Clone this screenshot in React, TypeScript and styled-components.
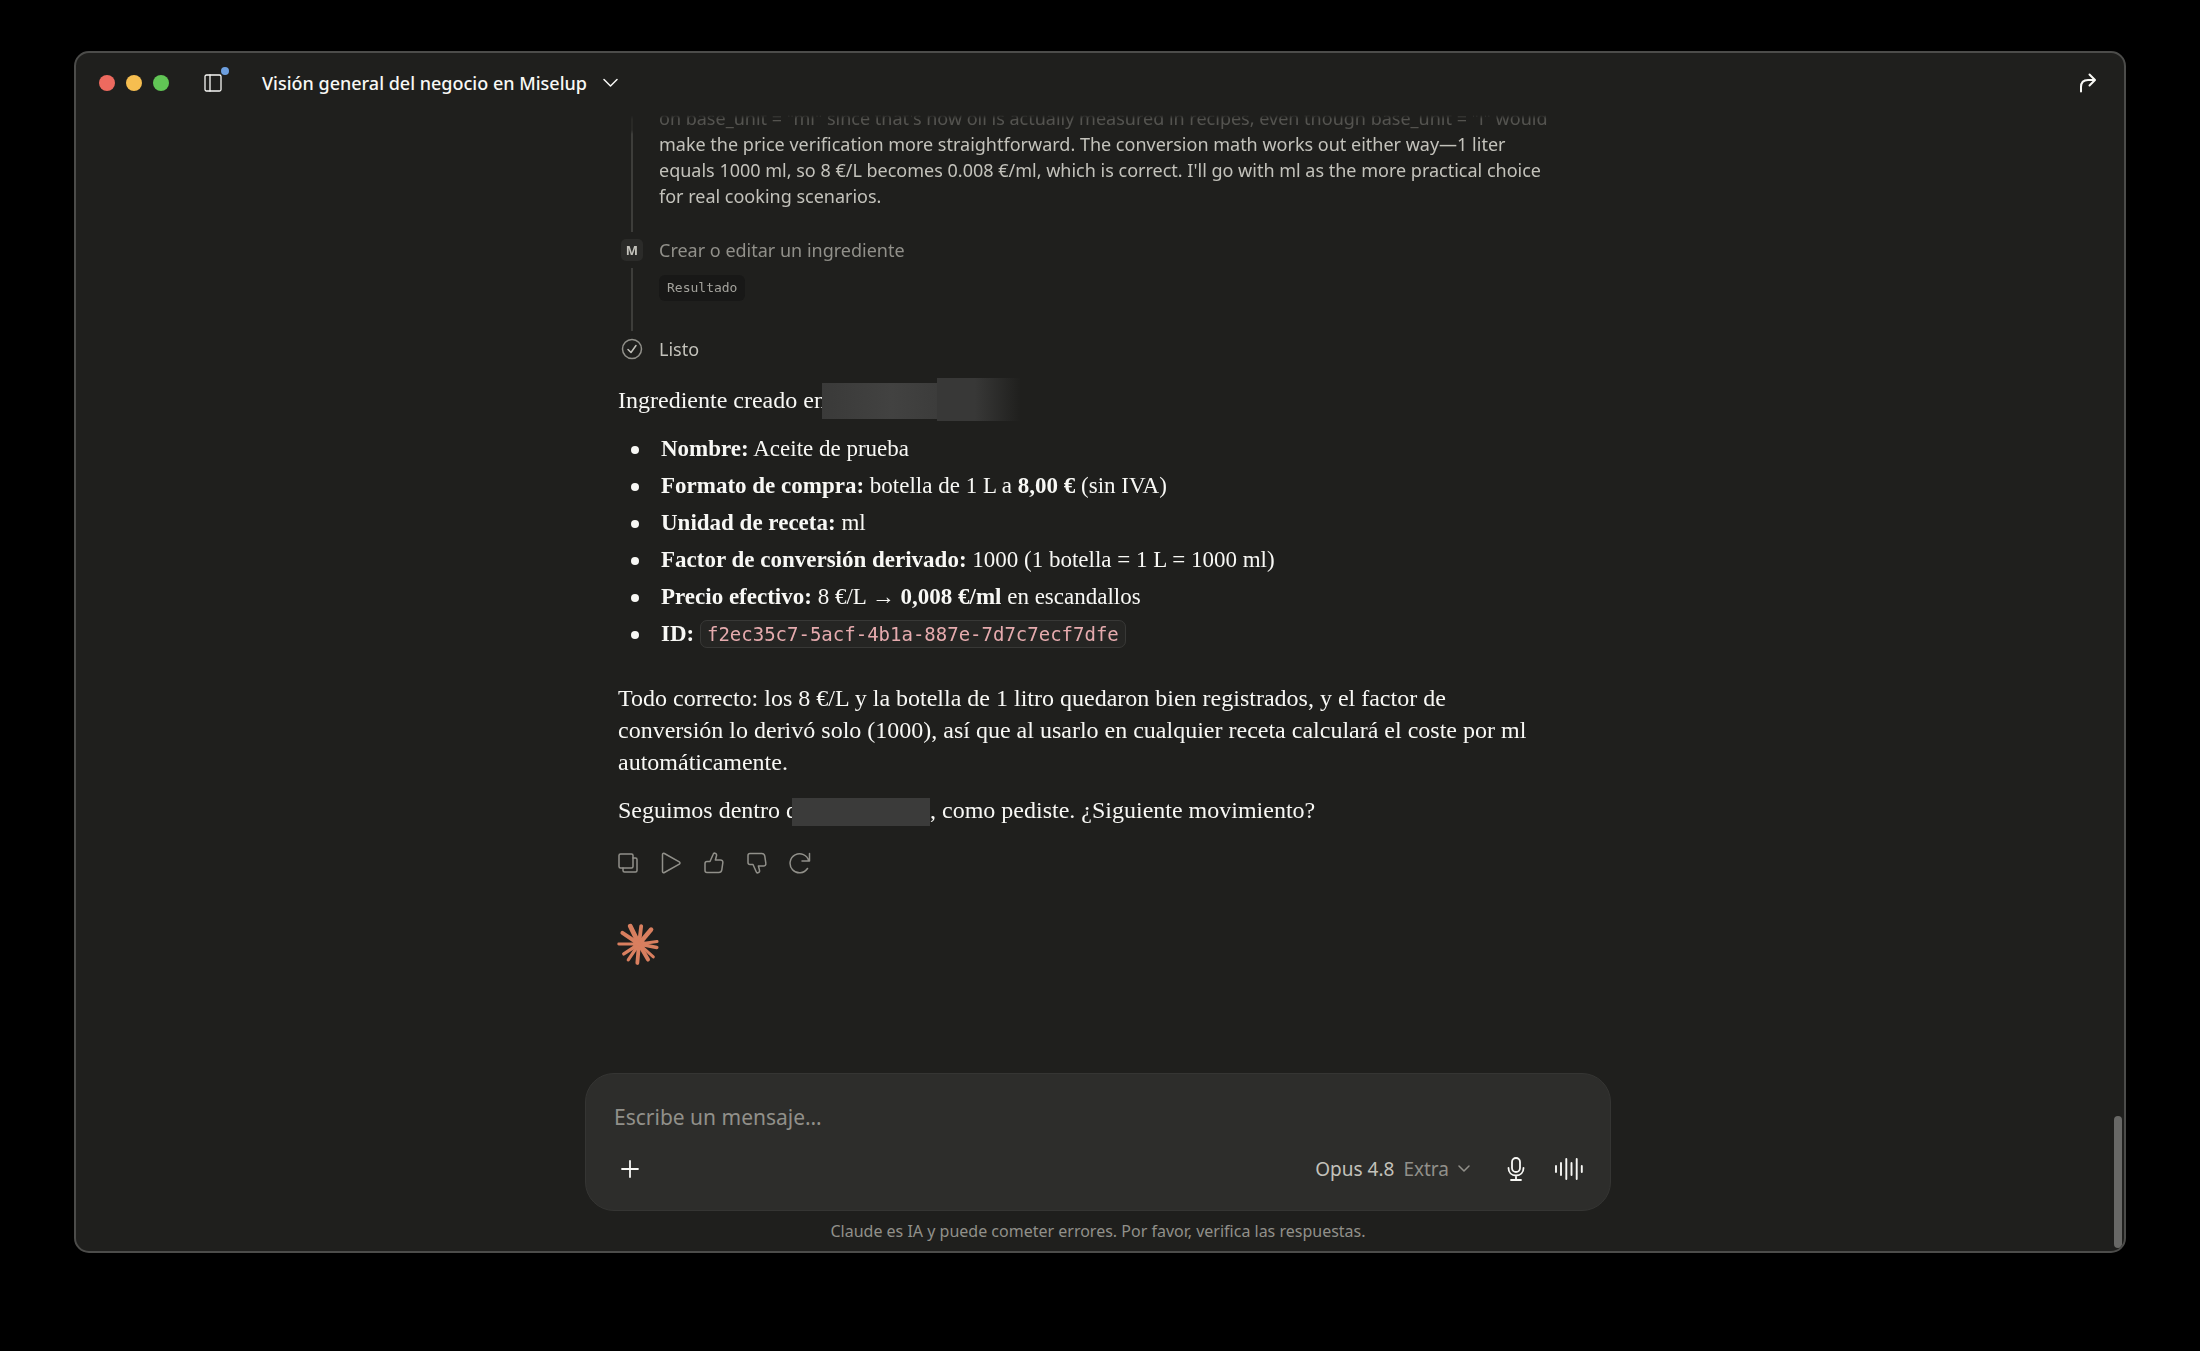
import React, { useState } from "react";
import styled, { createGlobalStyle } from "styled-components";

const sans = `"Noto Sans", "Open Sans", sans-serif`;
const serif = `"Liberation Serif", serif`;
const mono = `"DejaVu Sans Mono", monospace`;

const color = {
  window: "#1f1f1d",
  panel: "#2d2d2b",
  text: "#f8f8f5",
  soft: "#c3c2bb",
  muted: "#91908a",
  rule: "#3d3d3a",
};

const GlobalStyle = createGlobalStyle`
  *, *::before, *::after { box-sizing: border-box; }
  body { margin: 0; background: #000; }
  button, textarea { font: inherit; color: inherit; }
  p, ul, h1 { margin: 0; padding: 0; }
`;

const Desktop = styled.div`
  display: flex;
  min-height: 100vh;
  padding: 51px 74px 98px;
  background: #000;
  font-family: ${sans};
  color: ${color.text};
`;

const Window = styled.div`
  position: relative;
  display: flex;
  flex-direction: column;
  flex: 1;
  min-width: 0;
  padding-right: 4px;
  overflow: hidden;
  background: ${color.window};
  border: 2px solid #4c4c4a;
  border-radius: 15px;
`;

const TitleBar = styled.header`
  display: flex;
  align-items: center;
  height: 60px;
  padding: 0 16px 0 23px;
`;

const Lights = styled.div`
  display: flex;
  gap: 11px;
`;

const Light = styled.button<{ $tone: string }>`
  width: 16px;
  height: 16px;
  padding: 0;
  border: 0;
  border-radius: 50%;
  background: ${(p) => p.$tone};
`;

const IconButton = styled.button`
  position: relative;
  display: inline-flex;
  align-items: center;
  justify-content: center;
  flex: none;
  width: 32px;
  height: 32px;
  padding: 0;
  border: 0;
  background: none;
  cursor: pointer;

  svg { display: block; }
`;

const SidebarButton = styled(IconButton)`
  margin-left: 28px;
`;

const UnreadDot = styled.span`
  position: absolute;
  top: 0;
  right: 0;
  width: 8px;
  height: 8px;
  border-radius: 50%;
  background: #6d9fdf;
`;

const TitleButton = styled.button`
  display: flex;
  align-items: center;
  gap: 16px;
  margin-left: 33px;
  margin-right: auto;
  padding: 0;
  border: 0;
  background: none;
  font-size: 18px;
  line-height: 26px;
  font-weight: 500;
  cursor: pointer;
`;

const Scroll = styled.main`
  flex: 1;
  min-height: 0;
  overflow: hidden;
  mask-image: linear-gradient(to bottom, transparent 2px, rgba(0, 0, 0, 0.32) 6px, rgba(0, 0, 0, 0.32) 17px, #000 21px);
`;

const Column = styled.div`
  display: flex;
  flex-direction: column;
  width: 100%;
  max-width: 960px;
  margin: 0 auto;
`;

const Steps = styled.div`
  display: grid;
  grid-template-columns: 28px 1fr;
  column-gap: 13px;
  margin-top: -8px;
  font-size: 18px;
  line-height: 26px;
`;

const Rail = styled.div`
  justify-self: center;
  width: 2px;
  background: ${color.rule};
`;

const Thought = styled.p`
  padding: 0 20px 23px 0;
  color: ${color.soft};
`;

const Marker = styled.div`
  display: flex;
  align-items: center;
  justify-content: center;
  height: 36px;
`;

const Avatar = styled.span`
  width: 22px;
  height: 22px;
  border-radius: 5px;
  background: #2b2b29;
  color: ${color.soft};
  font-size: 13px;
  line-height: 22px;
  font-weight: 700;
  text-align: center;
`;

const StepLabel = styled.div<{ $done?: boolean }>`
  display: flex;
  align-items: center;
  height: 36px;
  color: ${(p) => (p.$done ? color.soft : color.muted)};
`;

const StepBody = styled.div`
  display: flex;
  align-items: flex-start;
  padding: 7px 0 30px;
`;

const ResultButton = styled.button`
  height: 26px;
  padding: 0 8px;
  border: 0;
  border-radius: 6px;
  background: #181817;
  color: #a3a29c;
  font-family: ${mono};
  font-size: 13px;
  line-height: 26px;
  cursor: pointer;
`;

const Answer = styled.article`
  display: flex;
  flex-direction: column;
  margin-top: 17px;
  font-family: ${serif};
  font-size: 24px;
  line-height: 32px;
`;

const Paragraph = styled.p<{ $gap?: number }>`
  margin-top: ${(p) => p.$gap ?? 0}px;
  padding-right: 40px;
`;

const FactList = styled.ul`
  display: grid;
  row-gap: 5px;
  margin-top: 17px;
  padding-left: 43px;
  font-size: 23px;
  list-style: none;
`;

const Fact = styled.li`
  display: block;

  &::before {
    content: "";
    float: left;
    width: 8px;
    height: 8px;
    margin: 13px 0 0 -30px;
    border-radius: 50%;
    background: ${color.text};
  }
`;

const Code = styled.code`
  padding: 2px 6px;
  border: 1px solid #383836;
  border-radius: 7px;
  background: #252523;
  color: #e6abae;
  font-family: ${mono};
  font-size: 19px;
  line-height: 22px;
`;

const Redacted = styled.span`
  display: inline-block;
  width: 138px;
  height: 28px;
  margin-left: -6px;
  background: #3b3b3a;
  vertical-align: -8px;
`;

const NameMask = styled.span`
  position: relative;
  display: inline-flex;
  width: 200px;
  height: 32px;
  margin-left: -4px;
  vertical-align: top;
`;

const MaskBlock = styled.span`
  position: absolute;
  inset: -1px auto auto 0;
  width: 116px;
  height: 36px;
  background: linear-gradient(to right, #3a3a39, #424241 60%, #3c3c3b);
`;

const MaskFade = styled.span`
  position: absolute;
  inset: -6px auto auto 115px;
  width: 84px;
  height: 43px;
  background: linear-gradient(to right, #383837 45%, ${color.window});
`;

const Actions = styled.div`
  display: flex;
  gap: 11px;
  margin: 21px 0 0 -6px;
  color: ${color.muted};
`;

const Logo = styled.svg`
  display: block;
  width: 44px;
  height: 44px;
  margin: 43px 0 0 -1px;
`;

const Dock = styled.footer`
  display: flex;
  flex-direction: column;
  align-items: center;
  padding: 0 20px;
`;

const Composer = styled.form`
  display: flex;
  flex-direction: column;
  width: 100%;
  max-width: 1026px;
  padding: 27px 25px 25px 28px;
  border: 1px solid #353533;
  border-radius: 29px;
  background: ${color.panel};
`;

const Message = styled.textarea`
  display: block;
  width: 100%;
  height: 32px;
  padding: 0;
  border: 0;
  outline: 0;
  resize: none;
  overflow: hidden;
  background: none;
  font-size: 21px;
  line-height: 32px;

  &::placeholder {
    color: ${color.muted};
    opacity: 1;
  }
`;

const Tools = styled.div`
  display: flex;
  align-items: center;
  gap: 21px;
  margin-top: 20px;
`;

const ModelButton = styled.button`
  display: flex;
  align-items: center;
  gap: 9px;
  margin-left: auto;
  margin-right: 9px;
  padding: 0;
  border: 0;
  background: none;
  color: ${color.soft};
  font-size: 19px;
  line-height: 26px;
  cursor: pointer;
`;

const Effort = styled.span`
  color: ${color.muted};
`;

const Notice = styled.p`
  padding: 8px 0;
  color: ${color.muted};
  font-size: 16px;
  line-height: 24px;
`;

const ScrollThumb = styled.div`
  position: absolute;
  right: 2px;
  bottom: 3px;
  width: 8px;
  height: 132px;
  border-radius: 4px;
  background: #686866;
`;

type IconProps = {
  w?: number;
  h?: number;
  box?: string;
  stroke?: number;
  children: React.ReactNode;
};

const Icon = ({ w = 22, h = 22, box, stroke = 1.5, children }: IconProps) => (
  <svg
    width={w}
    height={h}
    viewBox={box ?? `0 0 ${w} ${h}`}
    fill="none"
    stroke="currentColor"
    strokeWidth={stroke}
    strokeLinecap="round"
    strokeLinejoin="round"
    aria-hidden="true"
  >
    {children}
  </svg>
);

const facts: { label: string; value: React.ReactNode }[] = [
  { label: "Nombre:", value: "Aceite de prueba" },
  {
    label: "Formato de compra:",
    value: (
      <>
        botella de 1 L a <strong>8,00 €</strong> (sin IVA)
      </>
    ),
  },
  { label: "Unidad de receta:", value: "ml" },
  { label: "Factor de conversión derivado:", value: "1000 (1 botella = 1 L = 1000 ml)" },
  {
    label: "Precio efectivo:",
    value: (
      <>
        8 €/L → <strong>0,008 €/ml</strong> en escandallos
      </>
    ),
  },
  { label: "ID:", value: <Code>f2ec35c7-5acf-4b1a-887e-7d7c7ecf7dfe</Code> },
];

/* Rays of the logo: angle in degrees, outer radius and thickness. */
const rays: [number, number, number][] = [
  [-116, 21, 4.8],
  [-83, 19, 3.8],
  [-50, 20, 4.4],
  [-8, 19, 3],
  [11, 19, 3.6],
  [42, 20, 3],
  [60, 19, 4],
  [95, 20, 3.8],
  [124, 20, 3.2],
  [147, 19, 3.4],
  [180, 21, 2.8],
  [214, 21, 4],
];

export default function App() {
  const [message, setMessage] = useState("");

  return (
    <>
      <GlobalStyle />
      <Desktop>
        <Window>
          <TitleBar>
            <Lights>
              <Light $tone="#ed6a5f" aria-label="Cerrar" />
              <Light $tone="#f6be50" aria-label="Minimizar" />
              <Light $tone="#61c555" aria-label="Ampliar" />
            </Lights>
            <SidebarButton aria-label="Barra lateral">
              <Icon w={18} h={18} stroke={1.3}>
                <rect x="1" y="1" width="16" height="16" rx="1.5" />
                <path d="M6 1v16" />
              </Icon>
              <UnreadDot />
            </SidebarButton>
            <TitleButton>
              Visión general del negocio en Miselup
              <Icon w={15} h={10}>
                <path d="M1 1.5l6.5 6.5L14 1.5" />
              </Icon>
            </TitleButton>
            <IconButton aria-label="Compartir">
              <Icon w={18} h={20} stroke={2}>
                <path d="M2 18.500v-4.500c0-4.500 2.500-7 7-7h6.500M10.500 1.500l5.500 5.500-5.500 5.500" />
              </Icon>
            </IconButton>
          </TitleBar>

          <Scroll>
            <Column>
              <Steps>
                <Rail />
                <Thought>
                  on base_unit = "ml" since that's how oil is actually measured in recipes, even though base_unit = "l"
                  would make the price verification more straightforward. The conversion math works out either way—1
                  liter equals 1000 ml, so 8 €/L becomes 0.008 €/ml, which is correct. I'll go with ml as the more
                  practical choice for real cooking scenarios.
                </Thought>

                <Marker>
                  <Avatar>M</Avatar>
                </Marker>
                <StepLabel>Crear o editar un ingrediente</StepLabel>

                <Rail />
                <StepBody>
                  <ResultButton>Resultado</ResultButton>
                </StepBody>

                <Marker>
                  <Icon>
                    <circle cx="11" cy="11" r="9.500" stroke={color.muted} />
                    <path d="M7 11.500l3 3 5-7" stroke={color.soft} />
                  </Icon>
                </Marker>
                <StepLabel $done>Listo</StepLabel>
              </Steps>

              <Answer>
                <Paragraph>
                  Ingrediente creado en
                  <NameMask>
                    <MaskBlock />
                    <MaskFade />
                  </NameMask>
                </Paragraph>
                <FactList>
                  {facts.map((fact) => (
                    <Fact key={fact.label}>
                      <strong>{fact.label}</strong> {fact.value}
                    </Fact>
                  ))}
                </FactList>
                <Paragraph $gap={32}>
                  Todo correcto: los 8 €/L y la botella de 1 litro quedaron bien registrados, y el factor de conversión
                  lo derivó solo (1000), así que al usarlo en cualquier receta calculará el coste por ml
                  automáticamente.
                </Paragraph>
                <Paragraph $gap={16}>
                  Seguimos dentro d
                  <Redacted />, como pediste. ¿Siguiente movimiento?
                </Paragraph>
              </Answer>

              <Actions>
                <IconButton aria-label="Copiar">
                  <Icon w={20} h={20}>
                    <rect x="1" y="1" width="14" height="14" rx="1.500" />
                    <path d="M15 5h2.500a1.500 1.500 0 0 1 1.500 1.500V17.500a1.500 1.500 0 0 1-1.500 1.500H6.500A1.500 1.500 0 0 1 5 17.500V15" />
                  </Icon>
                </IconButton>
                <IconButton aria-label="Reproducir">
                  <Icon w={20} h={22}>
                    <path d="M1.500 2.600v16.800c0 1 1 1.600 1.900 1.100l14.900-8.400c.9-.5.9-1.700 0-2.200L3.400 1.500C2.500 1 1.500 1.600 1.500 2.600z" />
                  </Icon>
                </IconButton>
                <IconButton aria-label="Buena respuesta">
                  <Icon w={20} h={22}>
                    <path d="M3 9.500h3L9.200 2.200C9.500 1.300 10.200 1 11 1.200c1.300.3 1.800 1.400 1.500 2.600L11.400 8H16.500c1.600 0 2.600 1.200 2.300 2.800l-1 7c-.3 1.700-1.300 2.700-3 2.700H3c-1.200 0-2-.8-2-2v-7c0-1.200.8-2 2-2z" />
                  </Icon>
                </IconButton>
                <IconButton aria-label="Mala respuesta">
                  <Icon w={20} h={22}>
                    <path d="M3 12.500h3l3.200 7.300c.3.900 1 1.200 1.800 1 1.300-.3 1.800-1.400 1.500-2.600L11.400 14H16.500c1.600 0 2.600-1.200 2.300-2.800l-1-7c-.3-1.700-1.300-2.700-3-2.700H3c-1.200 0-2 .8-2 2v7c0 1.200.8 2 2 2z" />
                  </Icon>
                </IconButton>
                <IconButton aria-label="Reintentar">
                  <Icon w={22} h={22}>
                    <path d="M20.500 1.500v7.500h-7.500M19.800 9A9.500 9.500 0 1 0 18.500 16.500" />
                  </Icon>
                </IconButton>
              </Actions>

              <Logo viewBox="0 0 44 44" aria-hidden="true">
                <circle cx="22" cy="22" r="6" fill="#d97f5f" />
                {rays.map(([angle, length, thickness]) => (
                  <line
                    key={angle}
                    x1="22"
                    y1="22"
                    x2={22 + Math.cos((angle * Math.PI) / 180) * (length - thickness / 4)}
                    y2={22 + Math.sin((angle * Math.PI) / 180) * (length - thickness / 4)}
                    stroke="#d97f5f"
                    strokeWidth={thickness}
                    strokeLinecap="round"
                  />
                ))}
              </Logo>
            </Column>
          </Scroll>

          <Dock>
            <Composer onSubmit={(event) => event.preventDefault()}>
              <Message
                aria-label="Mensaje"
                placeholder="Escribe un mensaje…"
                rows={1}
                value={message}
                onChange={(event) => setMessage(event.target.value)}
              />
              <Tools>
                <IconButton type="button" aria-label="Añadir">
                  <Icon w={18} h={18} stroke={1.8}>
                    <path d="M9 1v16M1 9h16" />
                  </Icon>
                </IconButton>
                <ModelButton type="button">
                  Opus 4.8 <Effort>Extra</Effort>
                  <Icon w={12} h={8}>
                    <path d="M1 1l5 5 5-5" stroke={color.muted} />
                  </Icon>
                </ModelButton>
                <IconButton type="button" aria-label="Dictar">
                  <Icon w={18} h={24} stroke={1.8}>
                    <rect x="5" y="1" width="8" height="14" rx="4" />
                    <path d="M1.500 11c0 4.500 3 7.500 7.500 7.500s7.500-3 7.500-7.500M9 18.500V23M4 23h10" />
                  </Icon>
                </IconButton>
                <IconButton type="button" aria-label="Modo de voz">
                  <Icon w={28} h={22} stroke={1.9}>
                    <path d="M1 8v6M6 5v12M11.300 1v20M16.500 5v12M21.700 1v20M26.800 8v6" />
                  </Icon>
                </IconButton>
              </Tools>
            </Composer>
            <Notice>Claude es IA y puede cometer errores. Por favor, verifica las respuestas.</Notice>
          </Dock>
          <ScrollThumb />
        </Window>
      </Desktop>
    </>
  );
}
